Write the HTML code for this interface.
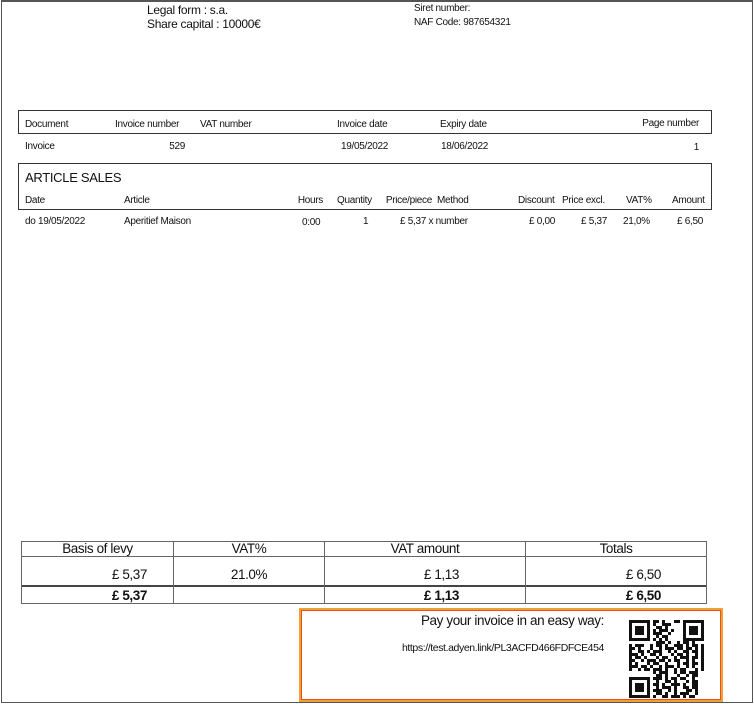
<!DOCTYPE html>
<html><head><meta charset="utf-8"><style>
*{margin:0;padding:0;box-sizing:border-box}
body{width:754px;height:704px;background:#fff;position:relative;overflow:hidden;font-family:"Liberation Sans",Arial,sans-serif;color:#111}
.t{position:absolute;white-space:nowrap;line-height:1}
.s{font-size:10px;letter-spacing:-0.3px}
.m{font-size:12px;letter-spacing:-0.3px}
.n{font-size:13.5px;letter-spacing:-0.4px}
.r{text-align:right}
.box{position:absolute;border:1px solid #333}
.l{position:absolute;background:#666}
</style></head><body>
<div style="position:absolute;left:1px;top:0;width:752px;height:703px;border:1px solid #555;border-top:2px solid #555"></div>

<div class="t m" style="left:147px;top:4px">Legal form : s.a.</div>
<div class="t m" style="left:147px;top:18px">Share capital : 10000€</div>
<div class="t s" style="left:414px;top:4px">Siret number:</div>
<div class="t s" style="left:414px;top:18px">NAF Code: 987654321</div>

<div class="box" style="left:18px;top:110px;width:694px;height:24px"></div>
<div class="t s" style="left:25px;top:120px">Document</div>
<div class="t s" style="left:115px;top:120px">Invoice number</div>
<div class="t s" style="left:200px;top:120px">VAT number</div>
<div class="t s" style="left:337px;top:120px">Invoice date</div>
<div class="t s" style="left:440px;top:120px">Expiry date</div>
<div class="t s r" style="right:55px;top:119px">Page number</div>
<div class="t s" style="left:25px;top:142px">Invoice</div>
<div class="t s r" style="right:569px;top:142px">529</div>
<div class="t s" style="left:341px;top:142px">19/05/2022</div>
<div class="t s" style="left:441px;top:142px">18/06/2022</div>
<div class="t s r" style="right:55px;top:143px">1</div>

<div class="box" style="left:18px;top:163px;width:694px;height:47px"></div>
<div class="t" style="left:25px;top:171px;font-size:13px;letter-spacing:-0.3px">ARTICLE SALES</div>
<div class="t s" style="left:25px;top:196px">Date</div>
<div class="t s" style="left:124px;top:196px">Article</div>
<div class="t s r" style="right:431px;top:196px">Hours</div>
<div class="t s" style="left:337px;top:196px">Quantity</div>
<div class="t s" style="left:384px;top:196px;width:48px;overflow:hidden;direction:rtl">Price/piece</div>
<div class="t s" style="left:437px;top:196px">Method</div>
<div class="t s" style="left:518px;top:196px">Discount</div>
<div class="t s" style="left:562px;top:196px">Price excl.</div>
<div class="t s" style="left:626px;top:196px">VAT%</div>
<div class="t s" style="left:672px;top:196px">Amount</div>
<div class="t s" style="left:25px;top:217px">do 19/05/2022</div>
<div class="t s" style="left:124px;top:217px">Aperitief Maison</div>
<div class="t s" style="left:302px;top:218px">0:00</div>
<div class="t s" style="left:363px;top:217px">1</div>
<div class="t s" style="left:400px;top:217px">£ 5,37 x number</div>
<div class="t s" style="left:529px;top:217px">£ 0,00</div>
<div class="t s" style="left:581px;top:217px">£ 5,37</div>
<div class="t s" style="left:623px;top:217px">21,0%</div>
<div class="t s" style="left:677px;top:217px">£ 6,50</div>

<div class="l" style="left:21px;top:541px;width:686px;height:1px"></div>
<div class="l" style="left:21px;top:556px;width:686px;height:1px"></div>
<div class="l" style="left:21px;top:585px;width:686px;height:2px;background:#444"></div>
<div class="l" style="left:21px;top:603px;width:686px;height:1px"></div>
<div class="l" style="left:21px;top:541px;width:1px;height:63px"></div>
<div class="l" style="left:173px;top:541px;width:1px;height:63px"></div>
<div class="l" style="left:324px;top:541px;width:1px;height:63px"></div>
<div class="l" style="left:525px;top:541px;width:1px;height:63px"></div>
<div class="l" style="left:706px;top:541px;width:1px;height:63px"></div>
<div class="t n" style="left:22px;width:151px;text-align:center;top:542px">Basis of levy</div>
<div class="t n" style="left:174px;width:150px;text-align:center;top:542px">VAT%</div>
<div class="t n" style="left:325px;width:200px;text-align:center;top:542px">VAT amount</div>
<div class="t n" style="left:526px;width:180px;text-align:center;top:542px">Totals</div>
<div class="t n r" style="right:607px;top:568px">£ 5,37</div>
<div class="t n" style="left:174px;width:150px;text-align:center;top:568px">21.0%</div>
<div class="t n r" style="right:295px;top:568px">£ 1,13</div>
<div class="t n r" style="right:93px;top:568px">£ 6,50</div>
<div class="t n r" style="right:607px;top:589px;font-weight:bold">£ 5,37</div>
<div class="t n r" style="right:295px;top:589px;font-weight:bold">£ 1,13</div>
<div class="t n r" style="right:93px;top:589px;font-weight:bold">£ 6,50</div>

<div style="position:absolute;left:299px;top:608px;width:424px;height:94px;border:2px solid #f0a030;box-shadow:inset 0 0 0 1px #e85020"></div>
<div class="t n r" style="right:150px;top:614px">Pay your invoice in an easy way:</div>
<div class="t" style="right:150px;top:643px;font-size:10.5px;letter-spacing:-0.4px">https://test.adyen.link/PL3ACFD466FDFCE454</div>

<svg style="position:absolute;left:629px;top:620px" width="75" height="78" viewBox="0 0 75 78">
<g stroke="#111" stroke-width="3" fill="none">
<line x1="0" y1="1.5" x2="75" y2="1.5" stroke-dasharray="0 24 6 3 3 9 6 24"/>
<line x1="0" y1="4.5" x2="75" y2="4.5" stroke-dasharray="0 24 3 6 9 33"/>
<line x1="0" y1="7.5" x2="75" y2="7.5" stroke-dasharray="0 27 6 3 3 36"/>
<line x1="0" y1="10.5" x2="75" y2="10.5" stroke-dasharray="0 24 3 3 9 3 3 30"/>
<line x1="0" y1="13.5" x2="75" y2="13.5" stroke-dasharray="0 24 9 6 3 33"/>
<line x1="0" y1="16.5" x2="75" y2="16.5" stroke-dasharray="0 27 3 3 6 36"/>
<line x1="0" y1="19.5" x2="75" y2="19.5" stroke-dasharray="0 24 3 3 3 3 3 39"/>
<line x1="0" y1="22.5" x2="75" y2="22.5" stroke-dasharray="0 27 9 3 3 6 3 3 6 3 3 9"/>
<line x1="0" y1="25.5" x2="75" y2="25.5" stroke-dasharray="3 3 9 6 3 3 6 3 3 6 9 3 3 3 6 3"/>
<line x1="0" y1="28.5" x2="75" y2="28.5" stroke-dasharray="6 3 3 9 3 6 3 3 9 3 6 3 6 3 3 3"/>
<line x1="0" y1="31.5" x2="75" y2="31.5" stroke-dasharray="3 6 6 3 3 3 9 6 3 3 3 6 6 3 6 3"/>
<line x1="0" y1="34.5" x2="75" y2="34.5" stroke-dasharray="9 3 3 6 6 3 3 9 3 3 6 3 3 6 3 3"/>
<line x1="0" y1="37.5" x2="75" y2="37.5" stroke-dasharray="3 3 6 3 3 9 3 3 6 6 3 3 9 3 6 3"/>
<line x1="0" y1="40.5" x2="75" y2="40.5" stroke-dasharray="6 6 3 3 9 3 6 3 3 3 6 6 3 3 3 6"/>
<line x1="0" y1="43.5" x2="75" y2="43.5" stroke-dasharray="3 3 3 9 3 3 6 6 3 9 3 3 6 3 6 3"/>
<line x1="0" y1="46.5" x2="75" y2="46.5" stroke-dasharray="9 3 6 3 3 6 3 3 9 3 3 6 3 3 3 6"/>
<line x1="0" y1="49.5" x2="75" y2="49.5" stroke-dasharray="3 6 3 3 6 3 9 3 3 6 3 3 6 9 3 3"/>
<line x1="0" y1="52.5" x2="75" y2="52.5" stroke-dasharray="0 24 3 3 9 6 3 3 6 3 9 6"/>
<line x1="0" y1="55.5" x2="75" y2="55.5" stroke-dasharray="0 27 6 3 3 9 3 6 3 3 6 6"/>
<line x1="0" y1="58.5" x2="75" y2="58.5" stroke-dasharray="0 24 9 3 3 3 6 3 6 6 3 9"/>
<line x1="0" y1="61.5" x2="75" y2="61.5" stroke-dasharray="0 27 3 6 6 3 3 9 3 3 6 6"/>
<line x1="0" y1="64.5" x2="75" y2="64.5" stroke-dasharray="0 24 6 3 3 6 9 3 3 6 6 6"/>
<line x1="0" y1="67.5" x2="75" y2="67.5" stroke-dasharray="0 27 3 3 9 3 3 6 6 3 6 6"/>
<line x1="0" y1="70.5" x2="75" y2="70.5" stroke-dasharray="0 24 9 6 3 3 3 9 6 3 3 6"/>
<line x1="0" y1="73.5" x2="75" y2="73.5" stroke-dasharray="0 27 6 3 3 6 3 3 9 6 3 6"/>
<line x1="0" y1="76.5" x2="75" y2="76.5" stroke-dasharray="0 24 3 6 6 3 9 3 3 3 6 9"/>
</g>
<g fill="none" stroke="#111" stroke-width="3">
<rect x="1.5" y="1.5" width="18" height="18"/>
<rect x="55.5" y="1.5" width="18" height="18"/>
<rect x="1.5" y="58.5" width="18" height="18"/>
</g>
<g fill="#111">
<rect x="6" y="6" width="9" height="9"/>
<rect x="60" y="6" width="9" height="9"/>
<rect x="6" y="63" width="9" height="9"/>
</g>
</svg>
</body></html>
